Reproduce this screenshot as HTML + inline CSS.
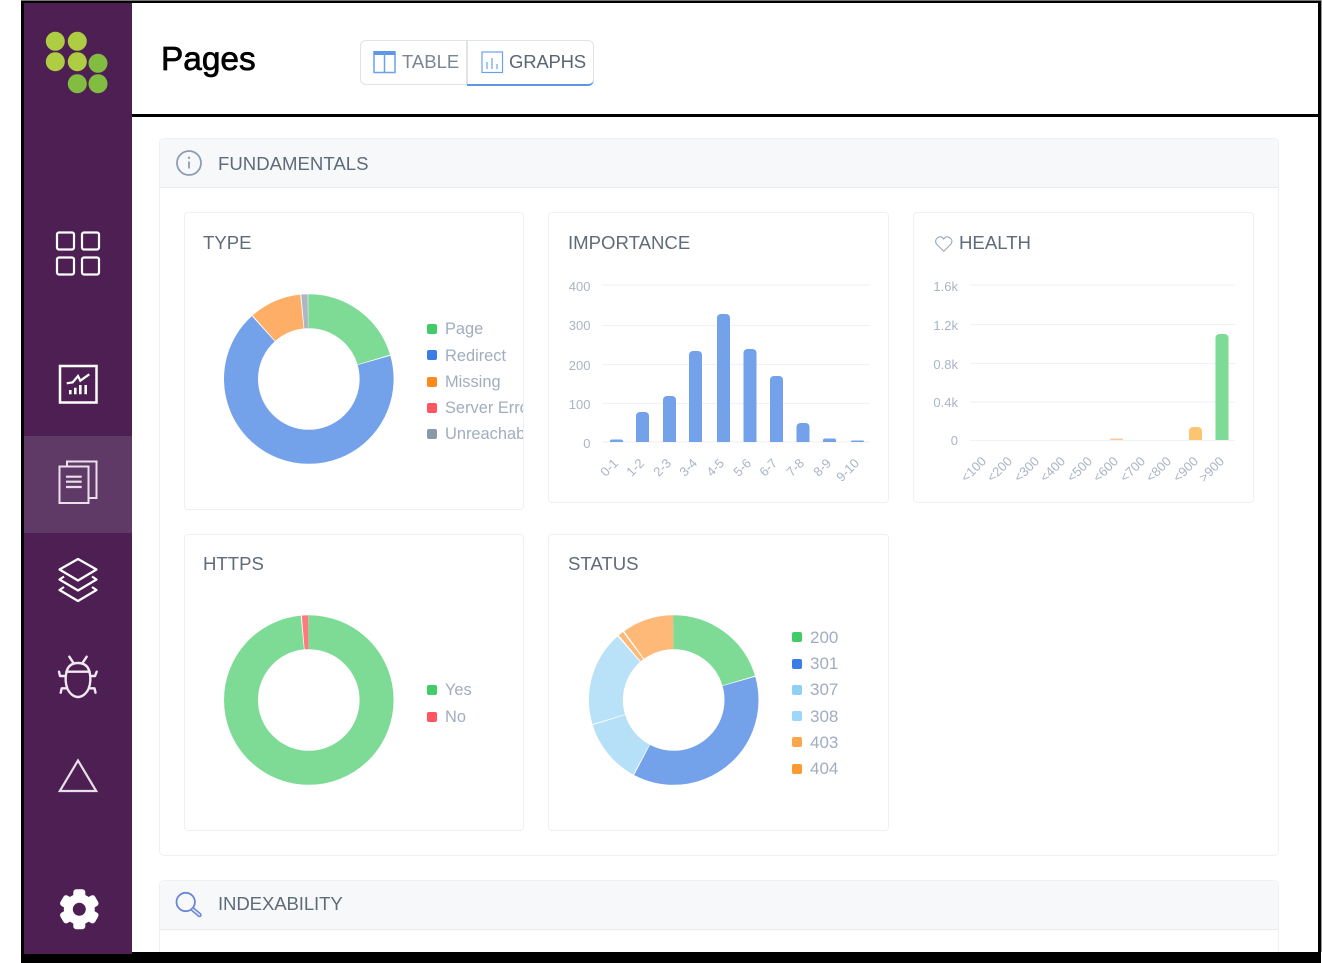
<!DOCTYPE html>
<html><head><meta charset="utf-8"><style>
html,body{margin:0;padding:0;background:#fff;width:1322px;height:963px;overflow:hidden}
body{position:relative;font-family:"Liberation Sans",sans-serif}
.a{position:absolute;box-sizing:border-box}
.sec{border:1px solid #eef0f2;border-radius:5px;background:#fff}
.sh{position:absolute;left:0;right:0;top:0;height:48px;background:#f7f8fa;border-bottom:1px solid #e8eaed;border-radius:5px 5px 0 0}
.st{position:absolute;left:218px;font-size:18.6px;color:#5f6b7a;line-height:22px;white-space:nowrap}
.card{position:absolute;border:1px solid #eef0f2;border-radius:4px;background:#fff;overflow:hidden;box-sizing:border-box}
.ct{position:absolute;font-size:18.6px;color:#5f6b7a;line-height:22px;white-space:nowrap}
.lg{position:absolute;font-size:16.4px;color:#a1adbf;line-height:18px;white-space:nowrap}
.lg.n{font-size:17px}
.sw{position:absolute;width:10px;height:10px;border-radius:2px}
svg text{font-family:"Liberation Sans",sans-serif}
</style></head><body>
<div class="a" style="left:21px;top:0;width:1300px;height:963px;background:#000"></div>
<div class="a" style="left:21px;top:0;width:1300px;height:1px;background:#777"></div>
<div class="a" style="left:1321px;top:0;width:1px;height:952px;background:#999"></div>
<div class="a" style="left:24px;top:3px;width:1294px;height:949px;background:#fff"></div>
<div class="a" style="left:24px;top:3px;width:108px;height:951px;background:#4d1f53"></div>
<div class="a" style="left:24px;top:436px;width:108px;height:97px;background:#603a66"></div>
<div class="a" style="left:132px;top:114px;width:1186px;height:3px;background:#000"></div>

<svg class="a" style="left:0;top:0" width="135" height="963" viewBox="0 0 135 963">
<g fill="#afcd42"><circle cx="55.3" cy="41.3" r="9.5"/><circle cx="77.3" cy="41.3" r="9.5"/><circle cx="55.3" cy="61.7" r="9.5"/><circle cx="77.3" cy="61.7" r="9.5"/></g>
<g fill="#82bd41"><circle cx="98" cy="63.3" r="9.5"/><circle cx="77.3" cy="83.7" r="9.5"/><circle cx="98" cy="83.7" r="9.5"/></g>
<g fill="none" stroke="#fff" stroke-width="2.2">
<rect x="57" y="232.5" width="17" height="17" rx="2"/><rect x="82" y="232.5" width="17" height="17" rx="2"/><rect x="57" y="257.5" width="17" height="17" rx="2"/><rect x="82" y="257.5" width="17" height="17" rx="2"/>
</g>
<rect x="60" y="366" width="36.5" height="36.5" fill="none" stroke="#fff" stroke-width="2.5"/>
<path d="M66.700 383.300l6-1 5.300-6.300 2.300 4.700 9-6.400" fill="none" stroke="#fff" stroke-width="2.200"/>
<path d="M70.300 394.300v-4.300M75.300 394.300v-6.600M80.300 394.300v-9.300M85.700 394.300v-9.300" stroke="#fff" stroke-width="2.600" fill="none"/>
<g fill="none" stroke="#eadfeb" stroke-width="2">
<path d="M67 466v-4.500h29.500v36.500h-7"/>
<rect x="59.500" y="466.500" width="29" height="36.500"/>
<path d="M66 476.700h15.700M66 481.700h15.700M66 487h15.700" stroke-width="2.200"/>
</g>
<g fill="none" stroke="#fff" stroke-width="2.200" stroke-linejoin="round">
<path d="M78 559l18.500 10.500L78 580.500 59.500 569.500z"/>
<path d="M64 576.500l-4.500 3L78 590.500 96.500 579.500l-4.500-3"/>
<path d="M64 587l-4.500 3L78 601 96.500 590l-4.500-3"/>
</g>
<g fill="none" stroke="#f0e9f1" stroke-width="2.400" stroke-linecap="round" stroke-linejoin="round">
<path d="M66.500 671.700C68 666 72 663 78 663s10 3 11.500 8.700C91 678 90.500 684 88.500 689 86 694 82 697 78 697s-8-3-10.500-8C65.500 684 65 678 66.500 671.700z"/>
<path d="M66.500 671.700h23"/>
<path d="M69.300 656.700l4 6M86.700 656.700l-4 6"/>
<path d="M59 671.700l1 4.300h5M96.700 671.700l-1.700 4.300h-4.300"/>
<path d="M60.700 692.700l1-4.400h5M95.500 692.700l-1-4.400h-5"/>
</g>
<path d="M78 760.500L59.800 791h36.400z" fill="none" stroke="#e8dfe9" stroke-width="2.200"/>
<g fill="#fff" transform="translate(79.300 909.300)">
<circle r="15.500"/>
<rect x="-6" y="-20" width="12" height="40" rx="3"/>
<rect x="-6" y="-20" width="12" height="40" rx="3" transform="rotate(60)"/>
<rect x="-6" y="-20" width="12" height="40" rx="3" transform="rotate(120)"/>
</g>
<circle cx="79.300" cy="909.300" r="6.500" fill="#4d1f53"/>
</svg>

<div class="a" style="left:161px;top:40px;font-size:33.4px;line-height:40px;color:#000;-webkit-text-stroke:.7px #000">Pages</div>

<div class="a" style="left:360px;top:40px;width:233.5px;height:45px;border:1px solid #dfe2e6;border-radius:6px;background:#fff"></div>
<div class="a" style="left:466px;top:41px;width:2px;height:44px;background:#dfe2e6"></div>
<div class="a" style="left:467px;top:80px;width:127px;height:6px;border-bottom:2.5px solid #5e96e8;border-radius:0 0 6px 0"></div>
<svg class="a" style="left:370px;top:48px" width="230" height="30" viewBox="370 48 230 30">
<rect x="374" y="52" width="21" height="20.500" fill="none" stroke="#6aa0ec" stroke-width="1.500"/>
<rect x="373.500" y="51" width="22" height="4" fill="#5e96e8"/>
<path d="M384.500 53v19" stroke="#6aa0ec" stroke-width="1.500"/>
<rect x="482" y="52" width="20.500" height="20.500" fill="none" stroke="#6aa0ec" stroke-width="1.200"/>
<path d="M487 62v7M492 58v11M497 64v5" stroke="#6aa0ec" stroke-width="1.200"/>
</svg>
<div class="a" style="left:402px;top:50px;font-size:18.5px;line-height:24px;color:#7b8694">TABLE</div>
<div class="a" style="left:509px;top:50px;font-size:18.5px;line-height:24px;letter-spacing:-.2px;color:#5a6675">GRAPHS</div>

<div class="a sec" style="left:159px;top:138px;width:1120px;height:717.5px"><div class="sh"></div></div>
<div class="st" style="top:153px">FUNDAMENTALS</div>
<svg class="a" style="left:175px;top:150px" width="28" height="28" viewBox="175 150 28 28">
<circle cx="189" cy="163" r="12" fill="none" stroke="#8c9db2" stroke-width="1.800"/>
<path d="M189 161.500v7" stroke="#8c9db2" stroke-width="1.800"/><circle cx="189" cy="157.800" r="1.200" fill="#8c9db2"/>
</svg>

<div class="card" style="left:184px;top:212px;width:340px;height:297.500px">
<div class="ct" style="left:18px;top:19px">TYPE</div>
<svg class="a" style="left:-1px;top:-1px" width="341" height="298" viewBox="184 212 341 298">
<g fill="none" stroke-width="34" transform="rotate(-90 308.800 379)">
<circle cx="308.800" cy="379" r="67.800" pathLength="100" stroke="#7edb95" stroke-dasharray="20.400 79.600"/>
<circle cx="308.800" cy="379" r="67.800" pathLength="100" stroke="#73a1ea" stroke-dasharray="67.800 32.200" stroke-dashoffset="-20.600"/>
<circle cx="308.800" cy="379" r="67.800" pathLength="100" stroke="#feae66" stroke-dasharray="9.900 90.100" stroke-dashoffset="-88.600"/>
<circle cx="308.800" cy="379" r="67.800" pathLength="100" stroke="#adb7c3" stroke-dasharray="1.200 98.800" stroke-dashoffset="-98.700"/>
</g></svg>
<div class="sw" style="left:242px;top:111px;background:#41cc68"></div><div class="lg" style="left:260px;top:107px">Page</div>
<div class="sw" style="left:242px;top:137px;background:#3a7de6"></div><div class="lg" style="left:260px;top:134px">Redirect</div>
<div class="sw" style="left:242px;top:164px;background:#fe8a1e"></div><div class="lg" style="left:260px;top:160px">Missing</div>
<div class="sw" style="left:242px;top:190px;background:#fe5560"></div><div class="lg" style="left:260px;top:186px">Server Errors</div>
<div class="sw" style="left:242px;top:216px;background:#8b98a9"></div><div class="lg" style="left:260px;top:212px">Unreachable</div>
</div>

<div class="card" style="left:548px;top:212px;width:341px;height:290.500px">
<div class="ct" style="left:19px;top:19px">IMPORTANCE</div>
<svg class="a" style="left:-1px;top:-1px" width="342" height="291" viewBox="548 212 342 291">
<path d="M602 285h268M602 325.500h268M602 364.500h268M602 403.500h268M602 442h268" stroke="#f1f2f5" stroke-width="1.200"/>
<g font-size="13" fill="#aab4c4" text-anchor="end"><text x="590.500" y="291">400</text><text x="590.500" y="330">300</text><text x="590.500" y="370">200</text><text x="590.500" y="409">100</text><text x="590.500" y="448">0</text></g>
<g fill="#73a1ea">
<path d="M610 442v-1a2 2 0 0 1 2-1.500h9a2 2 0 0 1 2 1.500v1z"/>
<path d="M636 442v-26a4 4 0 0 1 4-4h5a4 4 0 0 1 4 4v26z"/>
<path d="M663 442v-42a4 4 0 0 1 4-4h5a4 4 0 0 1 4 4v42z"/>
<path d="M689 442v-87a4 4 0 0 1 4-4h5a4 4 0 0 1 4 4v87z"/>
<path d="M717 442v-124a4 4 0 0 1 4-4h5a4 4 0 0 1 4 4v124z"/>
<path d="M743.500 442v-89a4 4 0 0 1 4-4h5a4 4 0 0 1 4 4v89z"/>
<path d="M770 442v-62a4 4 0 0 1 4-4h5a4 4 0 0 1 4 4v62z"/>
<path d="M796.500 442v-15a4 4 0 0 1 4-4h5a4 4 0 0 1 4 4v15z"/>
<path d="M823 442v-1.500a2 2 0 0 1 2-2h9a2 2 0 0 1 2 2v1.500z"/>
<path d="M851 442v-.5a1 1 0 0 1 1-1h11a1 1 0 0 1 1 1v.5z"/>
</g>
<g font-size="13" fill="#aab4c4" text-anchor="end">
<text transform="translate(619 464) rotate(-45)">0-1</text>
<text transform="translate(645 464) rotate(-45)">1-2</text>
<text transform="translate(672 464) rotate(-45)">2-3</text>
<text transform="translate(698 464) rotate(-45)">3-4</text>
<text transform="translate(725 464) rotate(-45)">4-5</text>
<text transform="translate(752 464) rotate(-45)">5-6</text>
<text transform="translate(778 464) rotate(-45)">6-7</text>
<text transform="translate(805 464) rotate(-45)">7-8</text>
<text transform="translate(832 464) rotate(-45)">8-9</text>
<text transform="translate(860 464) rotate(-45)">9-10</text>
</g></svg>
</div>

<div class="card" style="left:913px;top:212px;width:341px;height:290.500px">
<div class="ct" style="left:45px;top:19px">HEALTH</div>
<svg class="a" style="left:-1px;top:-1px" width="342" height="291" viewBox="913 212 342 291">
<path d="M943.700 251.300L936.500 244C933 239.500 940.500 233.500 943.700 239C947 233.500 954.500 239.500 951 244Z" fill="none" stroke="#9dabbb" stroke-width="1.100"/>
<path d="M970 285h265M970 324.500h265M970 363.500h265M970 402h265M970 440.500h265" stroke="#f1f2f5" stroke-width="1.200"/>
<g font-size="13" fill="#aab4c4" text-anchor="end"><text x="958" y="291">1.6k</text><text x="958" y="330">1.2k</text><text x="958" y="369">0.8k</text><text x="958" y="407">0.4k</text><text x="958" y="445">0</text></g>
<path d="M1110 440v-.5a1 1 0 0 1 1-1h11a1 1 0 0 1 1 1v.5z" fill="#fcc8a0"/>
<path d="M1189 440v-9a4 4 0 0 1 4-4h5a4 4 0 0 1 4 4v9z" fill="#fcc572"/>
<path d="M1215.500 440v-102a4 4 0 0 1 4-4h5a4 4 0 0 1 4 4v102z" fill="#7edb95"/>
<g font-size="13" fill="#aab4c4" text-anchor="end">
<text transform="translate(987 462) rotate(-45)">&lt;100</text>
<text transform="translate(1013 462) rotate(-45)">&lt;200</text>
<text transform="translate(1040 462) rotate(-45)">&lt;300</text>
<text transform="translate(1066 462) rotate(-45)">&lt;400</text>
<text transform="translate(1093 462) rotate(-45)">&lt;500</text>
<text transform="translate(1119 462) rotate(-45)">&lt;600</text>
<text transform="translate(1146 462) rotate(-45)">&lt;700</text>
<text transform="translate(1172 462) rotate(-45)">&lt;800</text>
<text transform="translate(1199 462) rotate(-45)">&lt;900</text>
<text transform="translate(1225 462) rotate(-45)">&gt;900</text>
</g></svg>
</div>

<div class="card" style="left:184px;top:534px;width:340px;height:296.500px">
<div class="ct" style="left:18px;top:18px">HTTPS</div>
<svg class="a" style="left:-1px;top:-1px" width="341" height="297" viewBox="184 534 341 297">
<g fill="none" stroke-width="34" transform="rotate(-90 308.800 700)">
<circle cx="308.800" cy="700" r="67.800" pathLength="100" stroke="#7edb95" stroke-dasharray="98.600 1.400"/>
<circle cx="308.800" cy="700" r="67.800" pathLength="100" stroke="#fe7a80" stroke-dasharray="1.200 98.800" stroke-dashoffset="-98.800"/>
</g></svg>
<div class="sw" style="left:242px;top:150px;background:#41cc68"></div><div class="lg" style="left:260px;top:146px">Yes</div>
<div class="sw" style="left:242px;top:177px;background:#fe5560"></div><div class="lg" style="left:260px;top:173px">No</div>
</div>

<div class="card" style="left:548px;top:534px;width:341px;height:296.500px">
<div class="ct" style="left:19px;top:18px">STATUS</div>
<svg class="a" style="left:-1px;top:-1px" width="342" height="297" viewBox="548 534 342 297">
<g fill="none" stroke-width="34" transform="rotate(-90 673.700 700)">
<circle cx="673.700" cy="700" r="67.800" pathLength="100" stroke="#7edb95" stroke-dasharray="20.400 79.600"/>
<circle cx="673.700" cy="700" r="67.800" pathLength="100" stroke="#73a1ea" stroke-dasharray="37.200 62.800" stroke-dashoffset="-20.600"/>
<circle cx="673.700" cy="700" r="67.800" pathLength="100" stroke="#b6e0f7" stroke-dasharray="12.300 87.700" stroke-dashoffset="-58"/>
<circle cx="673.700" cy="700" r="67.800" pathLength="100" stroke="#b9e1f7" stroke-dasharray="18.100 81.900" stroke-dashoffset="-70.500"/>
<circle cx="673.700" cy="700" r="67.800" pathLength="100" stroke="#feb878" stroke-dasharray="1 99" stroke-dashoffset="-88.900"/>
<circle cx="673.700" cy="700" r="67.800" pathLength="100" stroke="#feb878" stroke-dasharray="9.800 90.200" stroke-dashoffset="-90.200"/>
</g></svg>
<div class="sw" style="left:243px;top:97px;background:#41cc68"></div><div class="lg n" style="left:261px;top:94px">200</div>
<div class="sw" style="left:243px;top:124px;background:#3a7de6"></div><div class="lg n" style="left:261px;top:120px">301</div>
<div class="sw" style="left:243px;top:150px;background:#8fd0f5"></div><div class="lg n" style="left:261px;top:146px">307</div>
<div class="sw" style="left:243px;top:176px;background:#9dd6f6"></div><div class="lg n" style="left:261px;top:173px">308</div>
<div class="sw" style="left:243px;top:202px;background:#fea64c"></div><div class="lg n" style="left:261px;top:199px">403</div>
<div class="sw" style="left:243px;top:229px;background:#fe9a34"></div><div class="lg n" style="left:261px;top:225px">404</div>
</div>

<div class="a sec" style="left:159px;top:880px;width:1120px;height:72px;border-bottom:0;border-radius:5px 5px 0 0"><div class="sh"></div></div>
<div class="st" style="top:893px;letter-spacing:-.12px">INDEXABILITY</div>
<svg class="a" style="left:172px;top:888px" width="32" height="32" viewBox="172 888 32 32">
<circle cx="185.700" cy="902" r="9.200" fill="none" stroke="#6a86d8" stroke-width="1.800"/>
<path d="M193 909.500l6.500 5.500" stroke="#6a86d8" stroke-width="4.500" stroke-linecap="round"/>
<path d="M193 909.500l6.500 5.500" stroke="#dfe6f8" stroke-width="1.500" stroke-linecap="round"/>
</svg>
</body></html>
